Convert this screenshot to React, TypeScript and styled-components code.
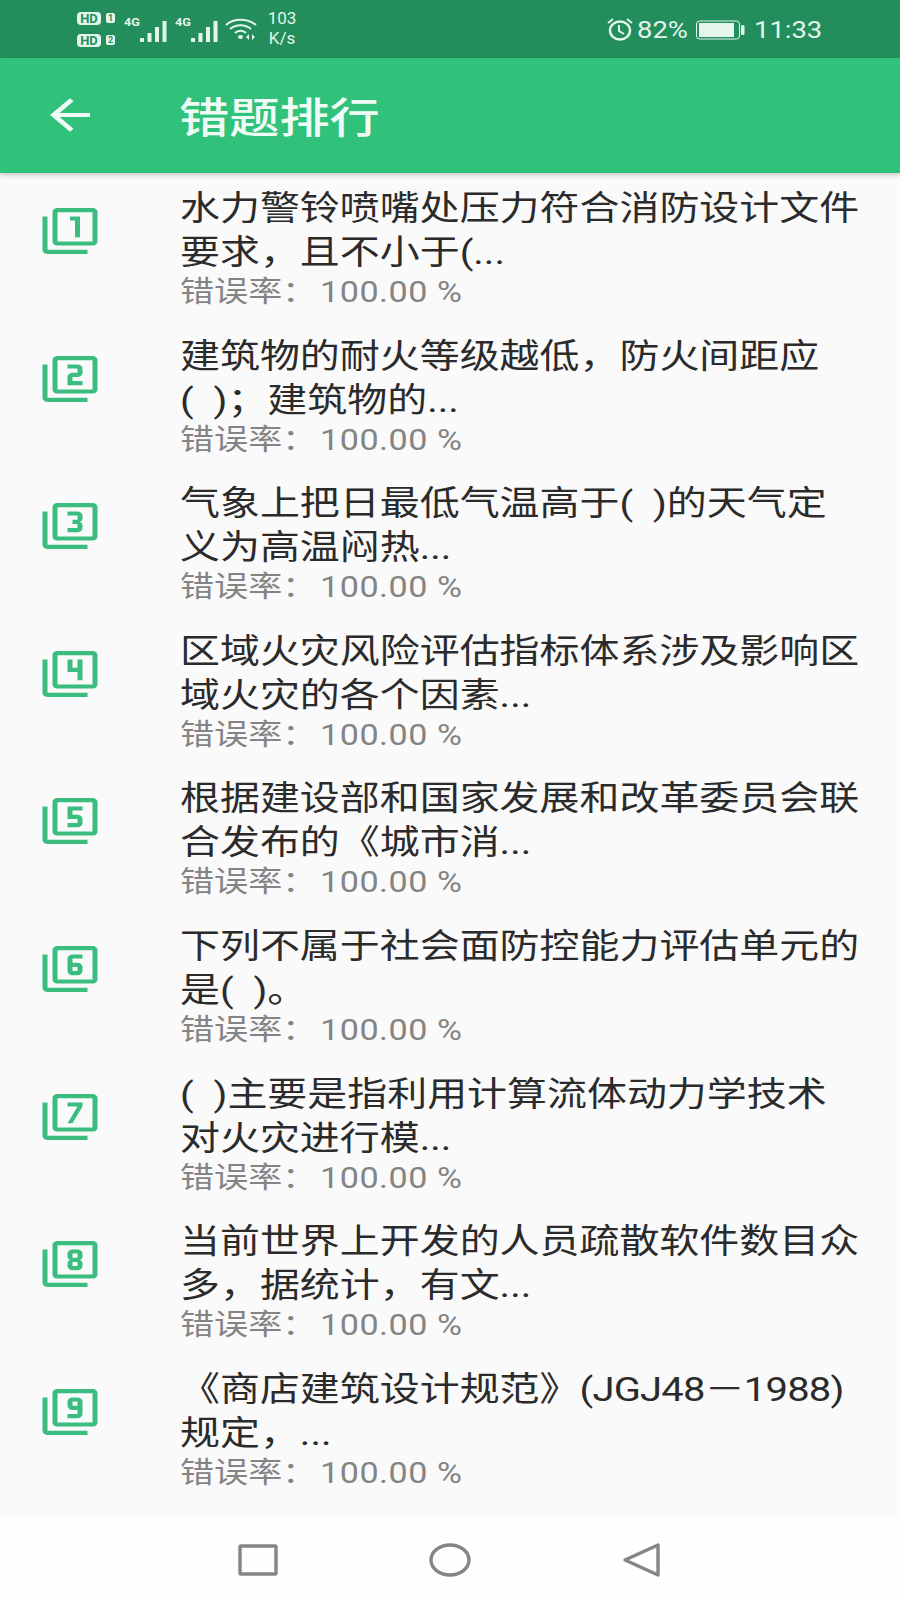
import React from 'react'
import styled, { createGlobalStyle } from 'styled-components'
import {
  MdArrowBack,
  MdFilter1,
  MdFilter2,
  MdFilter3,
  MdFilter4,
  MdFilter5,
  MdFilter6,
  MdFilter7,
  MdFilter8,
  MdFilter9,
} from 'react-icons/md'

const GlobalStyle = createGlobalStyle`
  html, body {
    margin: 0;
    padding: 0;
    background: #fafafa;
  }
  * {
    box-sizing: border-box;
  }
`

const FONT = `Roboto, "Noto Sans CJK SC", sans-serif`

// Style
const Page = styled.div`
  width: 900px;
  height: 1600px;
  display: flex;
  flex-direction: column;
  overflow: hidden;
  background: #fafafa;
  font-family: ${FONT};
`

const StatusBar = styled.div`
  height: 58px;
  flex: none;
  display: flex;
  align-items: center;
  justify-content: space-between;
  padding: 0 78px 0 77px;
  background: #238e5c;
  color: #e4f5ec;
`

const StatusGroup = styled.div`
  display: flex;
  align-items: center;
`

const SimColumn = styled.div`
  display: flex;
  flex-direction: column;
  gap: 9px;
  margin-right: 9px;
`

const SimRow = styled.div`
  display: flex;
  align-items: center;
  gap: 5px;
`

const HdBadge = styled.span`
  width: 24px;
  height: 13px;
  border-radius: 4px;
  background: #e4f5ec;
  color: #238e5c;
  font-size: 13px;
  font-weight: 700;
  line-height: 13px;
  text-align: center;
`

const SimNumber = styled.span`
  width: 9px;
  height: 10px;
  border-radius: 2px;
  background: #e4f5ec;
  color: #238e5c;
  font-size: 9px;
  font-weight: 700;
  line-height: 10px;
  text-align: center;
`

const Signal = styled.div`
  position: relative;
  width: 42px;
  height: 30px;
  margin-right: 9px;
`

const NetLabel = styled.span`
  position: absolute;
  left: 0;
  top: 3px;
  font-size: 11px;
  font-weight: 700;
  line-height: 12px;
  transform: scaleX(1.15);
  transform-origin: left;
`

const SignalIcon = styled.svg`
  position: absolute;
  right: -1px;
  bottom: 2px;
  width: 27px;
  height: 21px;
`

const Wifi = styled.svg`
  width: 32px;
  height: 22px;
  margin: 0 8px 0 -1px;
`

const Speed = styled.div`
  width: 34px;
  font-size: 17px;
  line-height: 20px;
  text-align: center;
  transform: translateY(-1px);
`

const Alarm = styled.svg`
  width: 28px;
  height: 24px;
  margin-right: 3px;
`

const StatusText = styled.span<{ $width: number }>`
  width: ${(p) => p.$width}px;
  font-size: 23px;
  line-height: 28px;
  white-space: nowrap;
  transform: translateY(2px) scaleX(1.19);
  transform-origin: left;
`

const Battery = styled.svg`
  width: 49px;
  height: 20px;
  margin: 2px 9px 0 7px;
`

const AppBar = styled.header`
  position: relative;
  z-index: 1;
  height: 115px;
  flex: none;
  display: flex;
  align-items: center;
  padding-left: 40px;
  background: #30c27b;
  color: #f0fbf5;
  box-shadow: 0 2px 5px rgba(0, 0, 0, 0.22);

  svg {
    width: 60px;
    height: 50px;
    margin: -2px 79px 0 0;
  }
`

const Stretched = styled.div`
  white-space: pre;
  transform: scaleX(1.175);
  transform-origin: left;
`

const Title = styled(Stretched)`
  padding-top: 6px;
  font-size: 42px;
  font-weight: 500;
  line-height: 50px;
  transform: scaleX(1.195);
`

const List = styled.main`
  flex: 1;
  min-height: 0;
  overflow: hidden;
`

const Row = styled.div`
  height: 147.6px;
  display: flex;
  padding-top: 13px;
`

const IconSlot = styled.div`
  width: 180px;
  flex: none;
  padding: 20px 0 0 40px;
  color: #3bbd80;

  svg {
    display: block;
    width: 60px;
    height: 50px;
  }
`

const Question = styled(Stretched)`
  font-size: 34px;
  line-height: 44px;
  color: #2b2b2b;
`

const Latin = styled.span`
  letter-spacing: -0.67px;
`

const Rate = styled(Stretched)`
  margin-top: 1px;
  font-size: 29px;
  line-height: 34px;
  color: #848484;
`

const RateValue = styled.span`
  margin-left: -4px;
  letter-spacing: 0.45px;
`

const NavBar = styled.nav`
  height: 82px;
  flex: none;
  display: flex;
  align-items: center;
  padding: 2px 0 0 236px;
  gap: 148px;
  background: #fefefe;
  color: #858585;
`

const NavIcon = styled.svg`
  width: 44px;
  height: 38px;
`

// Type
type TQuestion = {
  id: number
  icon: React.ComponentType
  lines: [React.ReactNode, React.ReactNode]
}

const QUESTIONS: TQuestion[] = [
  { id: 1, icon: MdFilter1, lines: ['水力警铃喷嘴处压力符合消防设计文件', '要求，且不小于(...'] },
  { id: 2, icon: MdFilter2, lines: ['建筑物的耐火等级越低，防火间距应', '(  )；建筑物的...'] },
  { id: 3, icon: MdFilter3, lines: ['气象上把日最低气温高于(  )的天气定', '义为高温闷热...'] },
  { id: 4, icon: MdFilter4, lines: ['区域火灾风险评估指标体系涉及影响区', '域火灾的各个因素...'] },
  { id: 5, icon: MdFilter5, lines: ['根据建设部和国家发展和改革委员会联', '合发布的《城市消...'] },
  { id: 6, icon: MdFilter6, lines: ['下列不属于社会面防控能力评估单元的', '是(  )。'] },
  { id: 7, icon: MdFilter7, lines: ['(  )主要是指利用计算流体动力学技术', '对火灾进行模...'] },
  { id: 8, icon: MdFilter8, lines: ['当前世界上开发的人员疏散软件数目众', '多，据统计，有文...'] },
  {
    id: 9,
    icon: MdFilter9,
    lines: [
      <>
        《商店建筑设计规范》<Latin>(JGJ48－1988)</Latin>
      </>,
      '规定，...',
    ],
  },
]

const SignalBars = () => (
  <SignalIcon viewBox='0 0 27 21' fill='currentColor'>
    <rect x='0' y='17' width='4' height='4' />
    <rect x='7.5' y='12' width='4' height='9' />
    <rect x='15' y='6' width='4' height='15' />
    <rect x='22.5' y='0' width='4' height='21' />
  </SignalIcon>
)

// Component
const App = () => {
  return (
    <Page>
      <GlobalStyle />
      <StatusBar>
        <StatusGroup>
          <SimColumn>
            <SimRow>
              <HdBadge>HD</HdBadge>
              <SimNumber>1</SimNumber>
            </SimRow>
            <SimRow>
              <HdBadge>HD</HdBadge>
              <SimNumber>2</SimNumber>
            </SimRow>
          </SimColumn>
          <Signal>
            <NetLabel>4G</NetLabel>
            <SignalBars />
          </Signal>
          <Signal>
            <NetLabel>4G</NetLabel>
            <SignalBars />
          </Signal>
          <Wifi viewBox='0 0 32 22' fill='none' stroke='currentColor' strokeWidth='2'>
            <path d='M1 7C9 0 22 0 31 7' />
            <path d='M5 11C11 6 20 6 26 11' />
            <path d='M10 15C13 12 18 12 21 15' />
            <ellipse cx='15.5' cy='19' rx='2.5' ry='2' fill='currentColor' stroke='none' />
            <path d='M24 16l-3 3 3 3zM27 16l3 3-3 3z' fill='currentColor' stroke='none' />
          </Wifi>
          <Speed>
            103
            <br />
            K/s
          </Speed>
        </StatusGroup>
        <StatusGroup>
          <Alarm viewBox='0 0 28 24' fill='none' stroke='currentColor' strokeWidth='2.4'>
            <ellipse cx='14' cy='13.5' rx='10' ry='9' />
            <path d='M13 8v6l5 3' strokeWidth='2' />
            <path d='M2 6l5-4M26 6l-5-4' strokeWidth='2' />
          </Alarm>
          <StatusText $width={52}>82%</StatusText>
          <Battery viewBox='0 0 49 20'>
            <rect x='0.5' y='1' width='43' height='18' rx='3' fill='none' stroke='currentColor' />
            <rect x='3' y='3' width='35' height='14' fill='currentColor' />
            <rect x='45' y='5' width='3.5' height='10' rx='1.5' fill='currentColor' />
          </Battery>
          <StatusText $width={68}>11:33</StatusText>
        </StatusGroup>
      </StatusBar>

      <AppBar>
        <MdArrowBack preserveAspectRatio='none' />
        <Title>错题排行</Title>
      </AppBar>

      <List>
        {QUESTIONS.map(({ id, icon: Icon, lines }) => {
          const FilterIcon = Icon as React.ComponentType<{ preserveAspectRatio: string }>

          return (
            <Row key={id}>
              <IconSlot>
                <FilterIcon preserveAspectRatio='none' />
              </IconSlot>
              <div>
                <Question>{lines[0]}</Question>
                <Question>{lines[1]}</Question>
                <Rate>
                  错误率： <RateValue>100.00 %</RateValue>
                </Rate>
              </div>
            </Row>
          )
        })}
      </List>

      <NavBar>
        <NavIcon viewBox='0 0 44 38' fill='none' stroke='currentColor' strokeWidth='3.4' strokeLinejoin='round'>
          <rect x='4' y='5' width='36' height='28' rx='1' />
        </NavIcon>
        <NavIcon viewBox='0 0 44 38' fill='none' stroke='currentColor' strokeWidth='3.4'>
          <ellipse cx='22' cy='19' rx='19' ry='15' />
        </NavIcon>
        <NavIcon viewBox='0 0 44 38' fill='none' stroke='currentColor' strokeWidth='3.4' strokeLinejoin='round'>
          <path d='M5 19L38 4V34Z' />
        </NavIcon>
      </NavBar>
    </Page>
  )
}

export default App
